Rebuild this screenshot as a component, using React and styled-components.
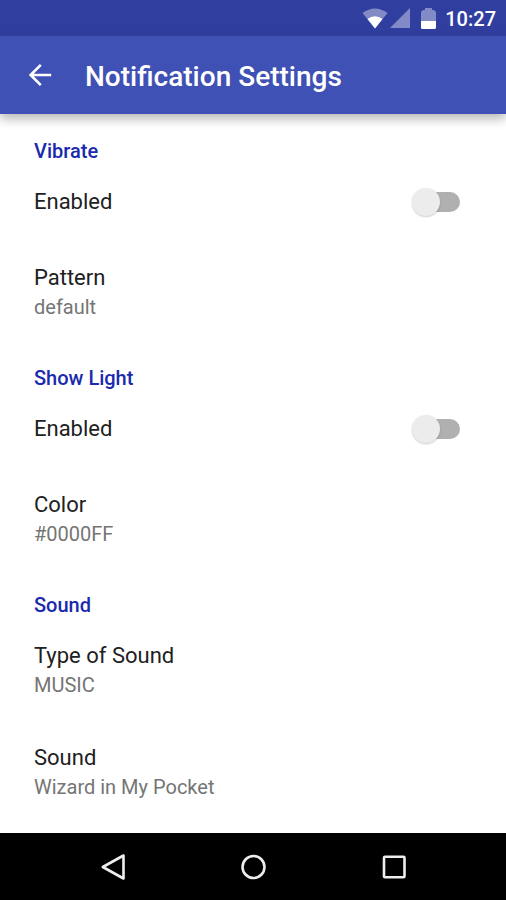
import React from "react";
import styled, { createGlobalStyle } from "styled-components";

const GlobalStyle = createGlobalStyle`
  *, *::before, *::after { box-sizing: border-box; }
  body {
    margin: 0;
    background: #fff;
    font-family: Roboto, "Liberation Sans", sans-serif;
  }
`;

const Screen = styled.div`
  display: flex;
  flex-direction: column;
  min-height: 100vh;
`;

const StatusBar = styled.div`
  display: flex;
  align-items: center;
  justify-content: flex-end;
  height: 36px;
  padding: 0 10px 0 0;
  background: #303f9f;
  color: #fff;
`;

const StatusIcon = styled.svg`
  display: block;
  flex: none;
  margin-right: ${(p) => p.$gap}px;
`;

const Clock = styled.time`
  font-size: 20px;
  font-weight: 500;
  line-height: 24px;
  padding-top: 2px;
`;

const AppBar = styled.header`
  display: flex;
  align-items: center;
  gap: 31px;
  height: 78px;
  padding: 0 26px;
  background: #3f51b5;
  color: #fff;
  box-shadow: 0 5px 10px rgba(0, 0, 0, 0.28);
  z-index: 1;
`;

const IconButton = styled.button`
  display: flex;
  padding: 0;
  border: 0;
  background: none;
  color: inherit;
  cursor: pointer;
`;

const Title = styled.h1`
  margin: 0;
  padding-top: 4px;
  font-size: 28px;
  font-weight: 500;
  line-height: 36px;
`;

const Content = styled.main`
  flex: 1;
  padding: 2px 0 10px;
`;

const SectionTitle = styled.h2`
  margin: 0;
  padding: 22px 34px 1px;
  color: #1a2aae;
  font-size: 20px;
  font-weight: 500;
  line-height: 26px;
`;

const SwitchRow = styled.label`
  display: flex;
  align-items: center;
  justify-content: space-between;
  height: 76px;
  padding: 0 46px 2px 34px;
  cursor: pointer;
`;

const PreferenceRow = styled.button`
  display: flex;
  flex-direction: column;
  justify-content: center;
  width: 100%;
  height: 102px;
  padding: 0 34px;
  border: 0;
  background: none;
  font-family: inherit;
  text-align: left;
  cursor: pointer;
`;

const Label = styled.span`
  color: #212121;
  font-size: 22px;
  line-height: 30px;
`;

const Summary = styled.span`
  color: #757575;
  font-size: 20px;
  line-height: 28px;
`;

const Switch = styled.input`
  appearance: none;
  display: flex;
  align-items: center;
  position: relative;
  width: 48px;
  height: 28px;
  margin: 0;
  cursor: pointer;

  &::before {
    content: "";
    width: 34px;
    height: 20px;
    margin-left: auto;
    border-radius: 10px;
    background: #b0b0b0;
  }

  &::after {
    content: "";
    position: absolute;
    top: 0;
    left: 0;
    width: 28px;
    height: 28px;
    border-radius: 50%;
    background: #ececec;
    box-shadow: 0 1px 2px rgba(0, 0, 0, 0.2);
  }

  &:checked::before { background: #9fa8da; }
  &:checked::after { left: 20px; background: #3f51b5; }
`;

const NavBar = styled.nav`
  display: flex;
  align-items: center;
  justify-content: center;
  gap: 108px;
  height: 67px;
  background: #000;
  color: #eee;
`;

const sections = [
  {
    title: "Vibrate",
    items: [{ label: "Enabled", toggle: true }, { label: "Pattern", summary: "default" }],
  },
  {
    title: "Show Light",
    items: [{ label: "Enabled", toggle: true }, { label: "Color", summary: "#0000FF" }],
  },
  {
    title: "Sound",
    items: [
      { label: "Type of Sound", summary: "MUSIC" },
      { label: "Sound", summary: "Wizard in My Pocket" },
    ],
  },
];

function StatusIcons() {
  return (
    <>
      <StatusIcon $gap={2} width="26" height="22" viewBox="0 0 26 22" aria-hidden="true">
        <path d="M0.5 6Q13 -3 25.5 6L13 21.5Z" fill="#fff" fillOpacity="0.4" />
        <path d="M5.5 12Q13 6.5 20.5 12L13 21.5Z" fill="#fff" />
      </StatusIcon>
      <StatusIcon $gap={11} width="20" height="20" viewBox="0 0 20 20" aria-hidden="true">
        <path d="M20 0V20H0Z" fill="#fff" fillOpacity="0.4" />
      </StatusIcon>
      <StatusIcon $gap={9} width="15" height="21" viewBox="0 0 15 21" aria-hidden="true">
        <path d="M4 0H11V2H13L15 4V13H0V4L2 2H4Z" fill="#fff" fillOpacity="0.4" />
        <path d="M0 13H15V19.5Q15 21 13.5 21H1.5Q0 21 0 19.5Z" fill="#fff" />
      </StatusIcon>
    </>
  );
}

function Item({ label, summary, toggle }) {
  if (toggle) {
    return (
      <SwitchRow>
        <Label>{label}</Label>
        <Switch type="checkbox" role="switch" />
      </SwitchRow>
    );
  }
  return (
    <PreferenceRow type="button">
      <Label>{label}</Label>
      <Summary>{summary}</Summary>
    </PreferenceRow>
  );
}

export default function App() {
  return (
    <Screen>
      <GlobalStyle />
      <StatusBar>
        <StatusIcons />
        <Clock>10:27</Clock>
      </StatusBar>
      <AppBar>
        <IconButton type="button" aria-label="Back">
          <svg width="28" height="28" viewBox="0 0 28 28" fill="none" stroke="currentColor" strokeWidth="2.6">
            <path d="M25.2 14H5M14.8 3.8L4.6 14L14.8 24.2" />
          </svg>
        </IconButton>
        <Title>Notification Settings</Title>
      </AppBar>
      <Content>
        {sections.map((section) => (
          <section key={section.title}>
            <SectionTitle>{section.title}</SectionTitle>
            {section.items.map((item) => (
              <Item key={item.label} {...item} />
            ))}
          </section>
        ))}
      </Content>
      <NavBar>
        <IconButton type="button" aria-label="Back">
          <svg width="32" height="32" viewBox="0 0 32 32" fill="none" stroke="currentColor" strokeWidth="2.6" strokeLinejoin="round">
            <path d="M26.5 4.5V27.5L5.8 16Z" />
          </svg>
        </IconButton>
        <IconButton type="button" aria-label="Home">
          <svg width="32" height="32" viewBox="0 0 32 32" fill="none" stroke="currentColor" strokeWidth="2.6">
            <circle cx="16.5" cy="16" r="11" />
          </svg>
        </IconButton>
        <IconButton type="button" aria-label="Recent apps">
          <svg width="32" height="32" viewBox="0 0 32 32" fill="none" stroke="currentColor" strokeWidth="2.6">
            <rect x="7" y="5.8" width="20.5" height="20.5" rx="1" />
          </svg>
        </IconButton>
      </NavBar>
    </Screen>
  );
}
